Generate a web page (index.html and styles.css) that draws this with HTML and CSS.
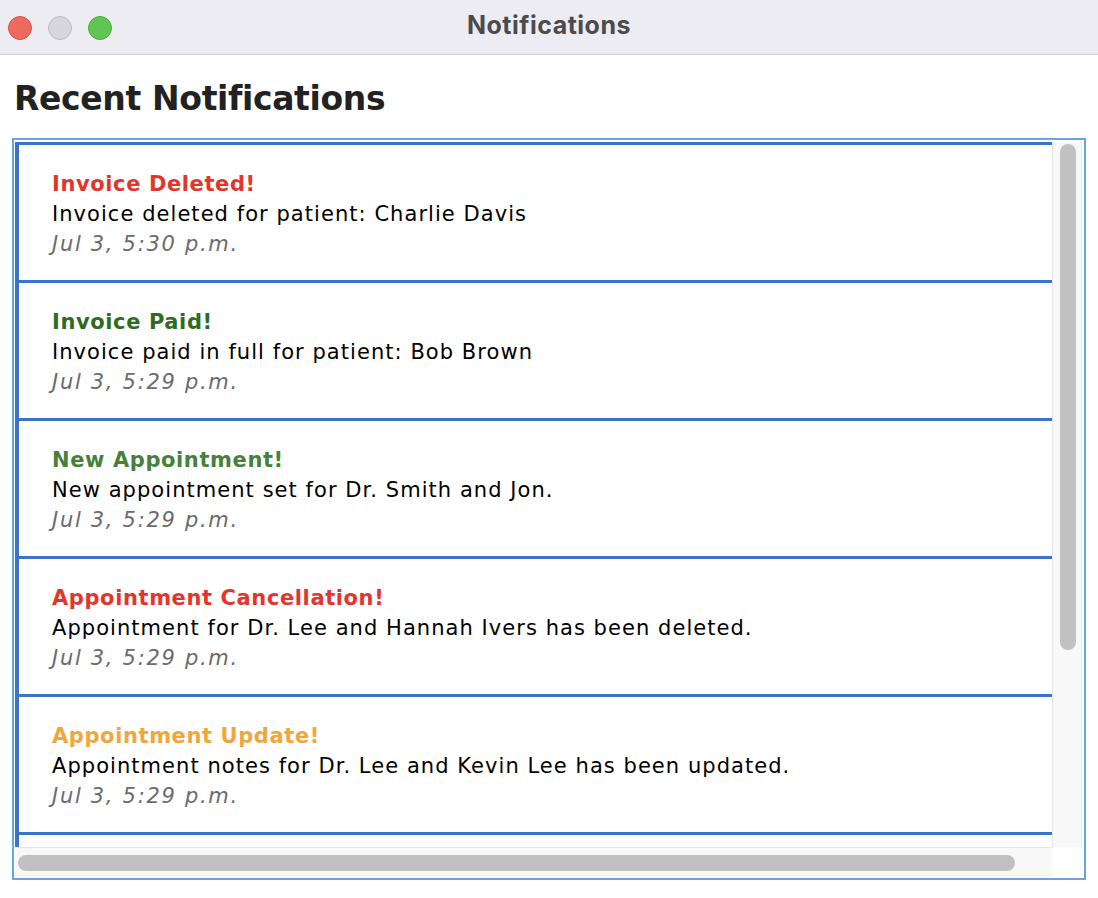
FILE: index.html
```html
<!DOCTYPE html>
<html>
<head>
<meta charset="utf-8">
<link rel="stylesheet" href="styles.css">
</head>
<body>
<div class="window">
  <div class="titlebar">
    <div class="lights">
      <span class="light red"></span>
      <span class="light grey"></span>
      <span class="light green"></span>
    </div>
    <div class="wtitle">Notifications</div>
  </div>
  <div class="body">
    <h1 class="heading">Recent Notifications</h1>
    <div class="scrollpane">
      <div class="viewport">
        <div class="cell">
          <div class="ntitle red-t">Invoice Deleted!</div>
          <div class="ntext">Invoice deleted for patient: Charlie Davis</div>
          <div class="ndate">Jul 3, 5:30 p.m.</div>
        </div>
        <div class="cell">
          <div class="ntitle dgreen-t">Invoice Paid!</div>
          <div class="ntext">Invoice paid in full for patient: Bob Brown</div>
          <div class="ndate">Jul 3, 5:29 p.m.</div>
        </div>
        <div class="cell">
          <div class="ntitle green-t">New Appointment!</div>
          <div class="ntext">New appointment set for Dr. Smith and Jon.</div>
          <div class="ndate">Jul 3, 5:29 p.m.</div>
        </div>
        <div class="cell">
          <div class="ntitle red-t">Appointment Cancellation!</div>
          <div class="ntext">Appointment for Dr. Lee and Hannah Ivers has been deleted.</div>
          <div class="ndate">Jul 3, 5:29 p.m.</div>
        </div>
        <div class="cell">
          <div class="ntitle orange-t">Appointment Update!</div>
          <div class="ntext">Appointment notes for Dr. Lee and Kevin Lee has been updated.</div>
          <div class="ndate">Jul 3, 5:29 p.m.</div>
        </div>
        <div class="cell"></div>
      </div>
      <div class="vbar"><div class="vthumb"></div></div>
      <div class="hbar"><div class="hthumb"></div></div>
      <div class="corner"></div>
    </div>
  </div>
</div>
</body>
</html>
```
FILE: styles.css
```css
* { box-sizing: border-box; }
html, body { margin: 0; padding: 0; }
body {
  width: 1098px;
  height: 898px;
  background: #ffffff;
  font-family: "DejaVu Sans", "Liberation Sans", sans-serif;
  overflow: hidden;
}
.window {
  width: 1098px;
  height: 898px;
  display: flex;
  flex-direction: column;
}
.titlebar {
  height: 55px;
  background: #edecf2;
  border-bottom: 1px solid #d4d4d6;
  display: flex;
  align-items: center;
  position: relative;
  flex-shrink: 0;
}
.lights {
  display: flex;
  gap: 16px;
  padding-left: 8px;
  padding-top: 1px;
}
.light {
  width: 24px;
  height: 24px;
  border-radius: 50%;
  display: block;
}
.light.red { background: #ed6a5e; border: 1px solid #d2574c; }
.light.grey { background: #d6d5db; border: 1px solid #bdbcc2; }
.light.green { background: #61c554; border: 1px solid #4fa941; }
.wtitle {
  position: absolute;
  left: 0;
  right: 0;
  top: 0;
  height: 54px;
  line-height: 50px;
  text-align: center;
  font-family: "Inter", "Liberation Sans", sans-serif;
  font-weight: 700;
  font-size: 25px;
  letter-spacing: 0.5px;
  color: #4b4b4d;
}
.body {
  flex: 1;
  display: flex;
  flex-direction: column;
  padding: 0 12px 0 12px;
}
.heading {
  margin: 24px 0 0 2px;
  height: 59px;
  font-size: 33px;
  letter-spacing: -0.35px;
  line-height: 40px;
  font-weight: 700;
  color: #222222;
}
.scrollpane {
  width: 1074px;
  height: 742px;
  border: 2px solid #6aa2e3;
  padding: 2px 2px 2px 1px;
  display: grid;
  grid-template-columns: 1fr 30px;
  grid-template-rows: 1fr 29px;
  background: #ffffff;
}
.viewport {
  overflow: hidden;
  background: #ffffff;
}
.cell {
  height: 138px;
  border-top: 3px solid #3a74c9;
  border-left: 4px solid #3a74c9;
  padding: 24px 0 0 33px;
  font-size: 21px;
  line-height: 30px;
}
.ntitle { font-weight: 700; letter-spacing: 0.6px; }
.ntext { color: #000000; letter-spacing: 1.05px; }
.ndate { font-style: italic; color: #6b6b6b; letter-spacing: 1.7px; }
.red-t { color: #e3352b; }
.dgreen-t { color: #2f6b21; }
.green-t { color: #48803b; }
.orange-t { color: #f1a63b; }
.vbar {
  background: #f8f8f8;
  border-left: 1px solid #e6e6e6;
  border-right: 1px solid #ececec;
  padding: 2px 5px 0 7px;
}
.vthumb {
  height: 506px;
  background: #c1c1c1;
  border-radius: 8px;
}
.hbar {
  background: #f8f8f8;
  border-top: 1px solid #e6e6e6;
  border-bottom: 1px solid #ececec;
  padding: 7px 37px 0 3px;
}
.hthumb {
  height: 16px;
  background: #c1c1c1;
  border-radius: 8px;
}
.corner { background: #ffffff; }
```
